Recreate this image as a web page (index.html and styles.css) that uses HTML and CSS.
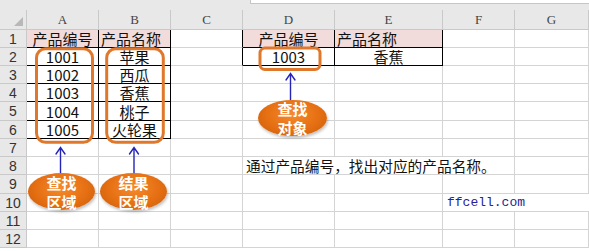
FILE: index.html
```html
<!DOCTYPE html>
<html lang="zh-CN">
<head>
<meta charset="utf-8">
<title>查找</title>
<link rel="stylesheet" href="styles.css">
</head>
<body>
<div class="page">
  <div class="topbar"><div class="fx"></div></div>
  <div class="grid">
    <div class="h corner"><span class="tri"></span></div>
    <div class="h">A</div><div class="h">B</div><div class="h">C</div><div class="h">D</div><div class="h">E</div><div class="h">F</div><div class="h">G</div>

    <div class="rh">1</div>
    <div class="c pink ctr bk">产品编号</div><div class="c pink bk">产品名称</div><div class="c bkr"></div><div class="c pink ctr bk">产品编号</div><div class="c pink bk">产品名称</div><div class="c"></div><div class="c"></div>

    <div class="rh">2</div>
    <div class="c ctr bk">1001</div><div class="c ctr bk">苹果</div><div class="c bkr"></div><div class="c ctr bk">1003</div><div class="c ctr bk">香蕉</div><div class="c"></div><div class="c"></div>

    <div class="rh">3</div>
    <div class="c ctr bk">1002</div><div class="c ctr bk">西瓜</div><div class="c"></div><div class="c"></div><div class="c"></div><div class="c"></div><div class="c"></div>

    <div class="rh">4</div>
    <div class="c ctr bk">1003</div><div class="c ctr bk">香蕉</div><div class="c"></div><div class="c"></div><div class="c"></div><div class="c"></div><div class="c"></div>

    <div class="rh">5</div>
    <div class="c ctr bk">1004</div><div class="c ctr bk">桃子</div><div class="c"></div><div class="c"></div><div class="c"></div><div class="c"></div><div class="c"></div>

    <div class="rh">6</div>
    <div class="c ctr bk">1005</div><div class="c ctr bk">火轮果</div><div class="c"></div><div class="c"></div><div class="c"></div><div class="c"></div><div class="c"></div>

    <div class="rh">7</div>
    <div class="c"></div><div class="c"></div><div class="c"></div><div class="c"></div><div class="c"></div><div class="c"></div><div class="c"></div>

    <div class="rh">8</div>
    <div class="c"></div><div class="c"></div><div class="c"></div><div class="c span3 note">通过产品编号，找出对应的产品名称。</div><div class="c"></div>

    <div class="rh">9</div>
    <div class="c"></div><div class="c"></div><div class="c"></div><div class="c"></div><div class="c"></div><div class="c"></div><div class="c"></div>

    <div class="rh">10</div>
    <div class="c"></div><div class="c"></div><div class="c"></div><div class="c"></div><div class="c"></div><div class="c span2 site">ffcell.com</div>

    <div class="rh">11</div>
    <div class="c"></div><div class="c"></div><div class="c"></div><div class="c"></div><div class="c"></div><div class="c"></div><div class="c"></div>

    <div class="rh">12</div>
    <div class="c"></div><div class="c"></div><div class="c"></div><div class="c"></div><div class="c"></div><div class="c"></div><div class="c"></div>
  </div>

  <svg class="overlay" width="589" height="251" viewBox="0 0 589 251">
    <g fill="none" stroke="#e0782c" stroke-width="3">
      <rect x="36.5" y="48.7" width="56" height="93.6" rx="9"/>
      <rect x="106.7" y="48.7" width="56.6" height="93.6" rx="9"/>
      <rect x="260" y="48" width="60" height="21.5" rx="5"/>
    </g>
    <g fill="none" stroke="#2424b8" stroke-width="1.4" stroke-linecap="round">
      <path d="M60.5 147.5 V173 M56 154 L60.5 147.5 L65 154"/>
      <path d="M134 147.5 V173 M129.5 154 L134 147.5 L138.5 154"/>
      <path d="M290.5 73.5 V100 M286 80 L290.5 73.5 L295 80"/>
    </g>
  </svg>

  <div class="bubble bA">查找<br>区域</div>
  <div class="bubble bB">结果<br>区域</div>
  <div class="bubble bD">查找<br>对象</div>
</div>
</body>
</html>
```
FILE: styles.css
```css
html, body {
  margin: 0;
  padding: 0;
  background: #fff;
}
body {
  font-family: "Noto Sans CJK SC", "Noto Sans", sans-serif;
}
.page {
  position: relative;
  width: 589px;
  height: 251px;
  overflow: hidden;
}
.topbar {
  height: 10px;
  background: #e8e8e8;
  display: flex;
  box-sizing: border-box;
}
.fx {
  margin-left: 250px;
  flex: 1;
  height: 3px;
  background: #fff;
  border-left: 1px solid #c6c6c6;
  border-bottom: 1px solid #c6c6c6;
}
.grid {
  display: grid;
  grid-template-columns: 27px 72px 72px 72px 92px 108px 72px 74px;
  grid-template-rows: 20px 18px 18px 18px 18px 19px 18px 18px 18px 19px 18px 18px 18px;
}
.h, .rh {
  background: #e8e8e8;
  border-right: 1px solid #c9c9c9;
  border-bottom: 1px solid #c9c9c9;
  box-sizing: border-box;
  display: flex;
  align-items: center;
  justify-content: center;
  color: #444;
}
.h {
  font-family: "Liberation Serif", serif;
  font-size: 13px;
}
.rh {
  font-family: "Liberation Sans", sans-serif;
  font-size: 14px;
  color: #333;
}
.corner {
  position: relative;
  justify-content: flex-end;
  align-items: flex-end;
  padding: 0 3px 3px 0;
}
.tri {
  width: 0;
  height: 0;
  border-left: 9px solid transparent;
  border-bottom: 9px solid #b8b8b8;
}
.c {
  border-right: 1px solid #d4d4d4;
  border-bottom: 1px solid #d4d4d4;
  box-sizing: border-box;
  font-size: 15px;
  line-height: 17px;
  color: #111;
  white-space: nowrap;
  display: flex;
  align-items: center;
  padding: 0 2px;
  min-width: 0;
}
.ctr {
  justify-content: center;
}
.pink {
  background: #f2dcdb;
}
.bk {
  border-right-color: #000;
  border-bottom-color: #000;
}
.bkr {
  border-right-color: #000;
}
.span3 {
  grid-column: span 3;
}
.span2 {
  grid-column: span 2;
}
.note {
  padding-left: 3px;
  font-size: 14.7px;
}
.site {
  padding-left: 4px;
  font-family: "Liberation Mono", monospace;
  font-size: 13px;
  color: #23239a;
  border-right: none;
}
.overlay {
  position: absolute;
  left: 0;
  top: 0;
  pointer-events: none;
}
.bubble {
  position: absolute;
  border-radius: 50%;
  background: radial-gradient(ellipse at 50% 40%, #f58a2c 0%, #e56f12 55%, #c85a0a 100%);
  box-shadow: 1px 2px 3px rgba(0, 0, 0, 0.25);
  color: #fff;
  font-weight: bold;
  font-size: 15px;
  line-height: 19px;
  display: flex;
  align-items: center;
  justify-content: center;
  text-align: center;
}
.bA {
  left: 28px;
  top: 173px;
  width: 67px;
  height: 37px;
}
.bB {
  left: 100px;
  top: 173px;
  width: 67px;
  height: 37px;
}
.bD {
  left: 258px;
  top: 100px;
  width: 69px;
  height: 36px;
}
```
